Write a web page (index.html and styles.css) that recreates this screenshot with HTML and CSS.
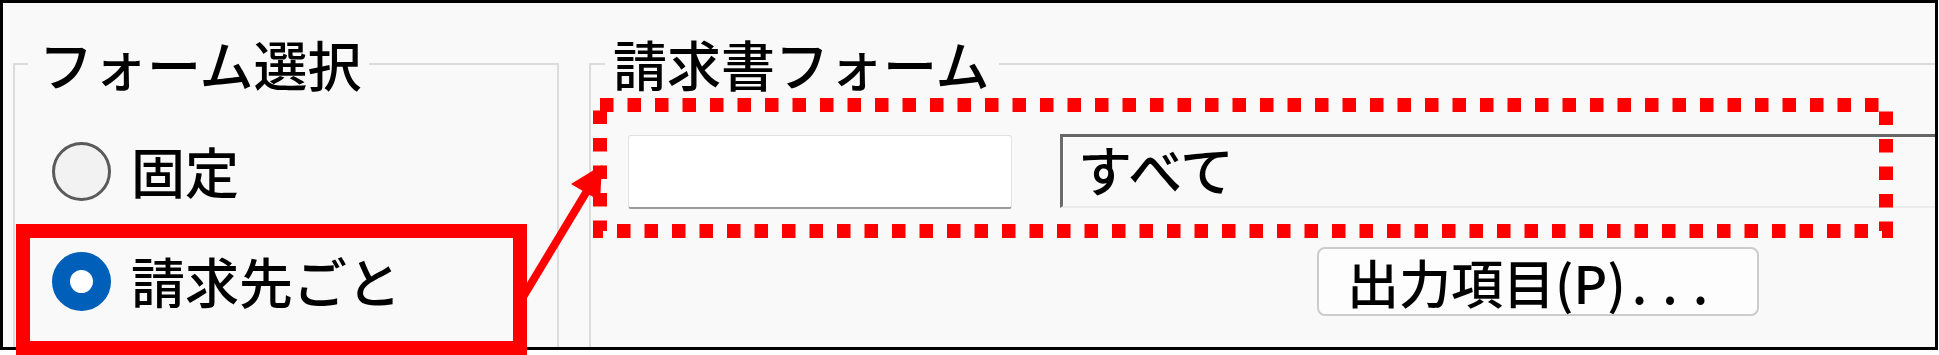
FILE: index.html
```html
<!DOCTYPE html>
<html lang="ja">
<head>
<meta charset="utf-8">
<title>フォーム選択</title>
<link rel="stylesheet" href="styles.css">
</head>
<body>
<div class="shot">
  <div class="window">
    <fieldset class="group group-select">
      <legend class="group-title">フォーム選択</legend>
      <div class="group-body radios">
        <label class="radio">
          <span class="radio-dot"></span>
          <span class="radio-label">固定</span>
        </label>
        <label class="radio is-checked">
          <span class="radio-dot"></span>
          <span class="radio-label">請求先ごと</span>
        </label>
      </div>
    </fieldset>
    <fieldset class="group group-invoice">
      <legend class="group-title">請求書フォーム</legend>
      <div class="group-body">
        <div class="field-row">
          <div class="text-input"></div>
          <div class="combo">すべて</div>
        </div>
        <button class="btn" type="button">出力項目(P)<span class="dots">...</span></button>
      </div>
    </fieldset>
  </div>
  <svg class="annot" width="1939" height="355" viewBox="0 0 1939 355" xmlns="http://www.w3.org/2000/svg">
    <rect x="23" y="231" width="497" height="117" fill="none" stroke="#ff0000" stroke-width="14"/>
    <rect x="600" y="105" width="1286" height="126" fill="none" stroke="#ff0000" stroke-width="14" stroke-dasharray="13.5 14"/>
    <line x1="520" y1="302" x2="590" y2="186" stroke="#ff0000" stroke-width="8"/>
    <polygon points="602,165 600,201 571,184" fill="#ff0000"/>
  </svg>
</div>
</body>
</html>
```

FILE: styles.css
```css
* { box-sizing: border-box; }

html, body {
  margin: 0;
  padding: 0;
  background: #ffffff;
}

body {
  font-family: "Noto Sans CJK JP", "Noto Sans", sans-serif;
  font-weight: 500;
  color: #000;
}

.shot {
  position: relative;
  width: 1939px;
  height: 355px;
}

.window {
  width: 1938px;
  height: 350px;
  border: 3px solid #000;
  background: #f9f9f9;
  overflow: hidden;
  display: flex;
  align-items: flex-start;
}

.group {
  margin: 34px 0 0 0;
  padding: 0;
  min-width: 0;
  height: 420px;
  border: 2px solid #dcdcdc;
  flex-shrink: 0;
}

.group-title {
  font-size: 54px;
  line-height: 54px;
  height: 54px;
  white-space: nowrap;
}

.group-select {
  width: 546px;
  margin-left: 10px;
}

.group-select .group-title {
  margin-left: 13px;
  padding: 0 8px 0 11px;
}

.group-invoice {
  width: 1400px;
  margin-left: 30px;
}

.group-invoice .group-title {
  margin-left: 14px;
  padding: 0 10px 0 8px;
}

.radios {
  padding: 51px 0 0 37px;
  display: flex;
  flex-direction: column;
  gap: 52px;
}

.radio {
  display: flex;
  align-items: center;
  height: 58px;
  gap: 20px;
}

.radio-dot {
  width: 59px;
  height: 59px;
  border-radius: 50%;
  border: 3px solid #5a5a5a;
  background: #f2f2f2;
  flex-shrink: 0;
}

.radio.is-checked .radio-dot {
  border: 18px solid #005fb8;
  background: #ffffff;
}

.radio-label {
  font-size: 54px;
  line-height: 58px;
  white-space: nowrap;
}

.group-invoice .group-body {
  padding: 44px 0 0 37px;
}

.field-row {
  display: flex;
  align-items: flex-start;
  gap: 48px;
}

.text-input {
  width: 384px;
  height: 74px;
  background: #ffffff;
  border: 1px solid #e3e3e3;
  border-bottom: 2px solid #9a9a9a;
  border-radius: 3px;
  flex-shrink: 0;
}

.combo {
  flex: 1;
  height: 74px;
  margin-top: -1px;
  background: #f9f9f9;
  border-top: 3px solid #666666;
  border-left: 3px solid #6b6b6b;
  border-bottom: 2px solid #ececec;
  box-shadow: inset 1px 1px 0 #ffffff;
  padding-left: 15px;
  font-size: 54px;
  line-height: 64px;
  white-space: nowrap;
}

.btn {
  display: block;
  margin: 38px 0 0 689px;
  width: 442px;
  height: 69px;
  padding: 0 0 0 28px;
  text-align: left;
  background: #fdfdfd;
  border: 2px solid #cccccc;
  border-radius: 8px;
  font-family: "Noto Sans CJK JP", "Noto Sans", sans-serif;
  font-weight: 500;
  font-size: 52px;
  line-height: 64px;
  color: #000;
  white-space: nowrap;
}

.dots {
  letter-spacing: 15px;
  margin-left: 6px;
}

.annot {
  position: absolute;
  left: 0;
  top: 0;
  pointer-events: none;
}
```
